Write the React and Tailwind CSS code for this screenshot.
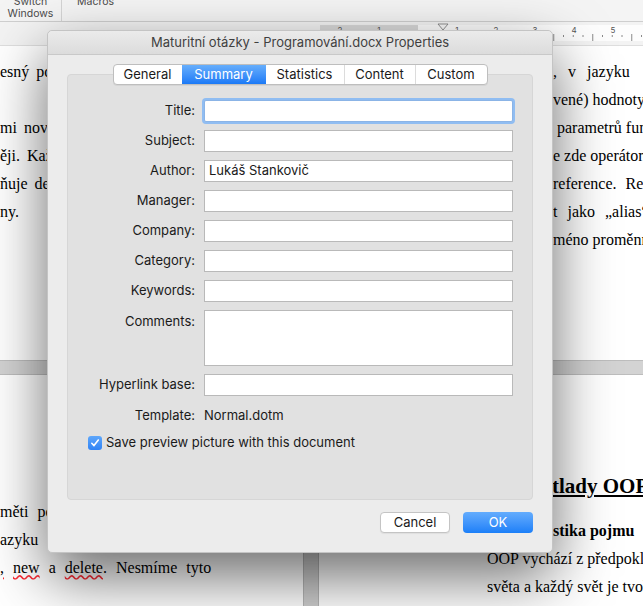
import React from 'react';

const ui = { fontFamily: 'Inter, "Noto Sans", sans-serif' };
const serif = { fontFamily: '"Liberation Serif", "DejaVu Serif", serif' };

const fields = [
  { label: 'Title:', value: '', focus: true },
  { label: 'Subject:', value: '' },
  { label: 'Author:', value: 'Lukáš Stankovič' },
  { label: 'Manager:', value: '' },
  { label: 'Company:', value: '' },
  { label: 'Category:', value: '' },
  { label: 'Keywords:', value: '' },
];

const tabs = [
  { name: 'General', w: 'w-[68px]' },
  { name: 'Summary', w: 'w-[84px]', active: true },
  { name: 'Statistics', w: 'w-[78px]' },
  { name: 'Content', w: 'w-[71px]' },
  { name: 'Custom', w: 'w-[72px]' },
];

const Ruler = () => {
  const nums = [
    { x: 340, t: '2' }, { x: 379, t: '1' }, { x: 457, t: '1' }, { x: 496, t: '2' },
    { x: 535, t: '3' }, { x: 574, t: '4' }, { x: 613, t: '5' },
  ];
  const ticks = [];
  for (let x = 427; x < 643; x += 9.75) ticks.push(x);
  return (
    <svg width="643" height="23" className="block">
      <rect x="0" y="0" width="643" height="23" fill="#f3f3f3" />
      <rect x="320" y="3" width="98" height="16" fill="#d9d9d9" />
      <rect x="418" y="3" width="225" height="16" fill="#fdfdfd" />
      {ticks.map((x, i) => (
        <line key={i} x1={x} x2={x} y1={i % 4 === 1 ? 12 : 13} y2={i % 4 === 1 ? 19 : 15} stroke="#8a8a8a" strokeWidth="1" />
      ))}
      {nums.map((n) => (
        <text key={n.x} x={n.x} y="11" fontSize="8" fill="#555" textAnchor="middle" fontFamily="Inter, sans-serif">{n.t}</text>
      ))}
      <path d="M438 2 L448 2 L443 8 Z" fill="#fafafa" stroke="#777" strokeWidth="0.8" />
    </svg>
  );
};

const Line = ({ children, className = '' }) => (
  <div className={`h-[28px] leading-[28px] whitespace-nowrap overflow-hidden ${className}`}>{children}</div>
);

export default function App() {
  return (
    <div className="relative w-[643px] h-[606px] overflow-hidden bg-[#d6d6d6] flex flex-col" style={ui}>
      {/* toolbar */}
      <div className="h-[22px] bg-[#f4f4f4] border-b border-[#cfcfcf] flex items-start overflow-hidden shrink-0">
        <div className="w-[62px] shrink-0 flex flex-col items-center -mt-[4px] text-[10.5px] leading-[12px] text-[#4a4a4a] border-r border-[#d4d4d4] h-[26px]">
          <span>Switch</span>
          <span>Windows</span>
        </div>
        <div className="pl-[15px] -mt-[4px] text-[10.5px] leading-[12px] text-[#4a4a4a]">Macros</div>
      </div>
      <div className="shrink-0 border-b border-[#dedede]">
        <Ruler />
      </div>

      {/* top pages */}
      <div className="h-[315px] flex shrink-0 border-b border-[#bdbdbd]" style={serif}>
        <div className="w-[303px] shrink-0 overflow-hidden bg-white pt-[12px] text-[16px] text-black [word-spacing:3px]">
          <Line>esný pokus o</Line>
          <Line> </Line>
          <Line>mi nový</Line>
          <Line>ěji. Každý</Line>
          <Line>ňuje defi</Line>
          <Line>ny.</Line>
        </div>
        <div className="w-[16px] shrink-0 bg-[#d0d0d0]" />
        <div className="flex-1 min-w-0 overflow-hidden bg-white pt-[12px] pl-[234px] text-[16px] text-black">
          <Line className="[word-spacing:7px]">, v jazyku</Line>
          <Line>vené) hodnoty</Line>
          <Line>&nbsp;parametrů funkce</Line>
          <Line>e zde operátor</Line>
          <Line className="[word-spacing:5px]">reference. Re</Line>
          <Line className="[word-spacing:6px]">t jako „alias“</Line>
          <Line>méno proměnné</Line>
        </div>
      </div>
      <div className="h-[14px] bg-[#d3d3d3] border-b border-[#bdbdbd] shrink-0" />

      {/* bottom pages */}
      <div className="flex-1 flex" style={serif}>
        <div className="w-[303px] shrink-0 overflow-hidden bg-white pt-[123px] text-[16px] text-black [word-spacing:5px]">
          <Line>měti po</Line>
          <Line>azyku C</Line>
          <Line>
            <span className="underline decoration-wavy decoration-red-500">,</span>{' '}
            <span className="underline decoration-wavy decoration-red-500">new</span> a{' '}
            <span className="underline decoration-wavy decoration-red-500">delete</span>. Nesmíme tyto
          </Line>
        </div>
        <div className="w-[16px] shrink-0 bg-[#cdcdcd] border-x border-[#b5b5b5]" />
        <div className="flex-1 min-w-0 overflow-hidden bg-white pt-[96px] text-black">
          <div className="ml-[233px] h-[30px] leading-[30px] text-[21px] font-bold underline whitespace-nowrap overflow-hidden">tlady OOP</div>
          <div className="ml-[234px] mt-[16px] h-[28px] leading-[28px] text-[16px] font-bold whitespace-nowrap overflow-hidden">stika pojmu</div>
          <Line className="ml-[168px] text-[16px]">OOP vychází z předpokladu</Line>
          <Line className="ml-[168px] text-[16px]">světa a každý svět je tvořen</Line>
        </div>
      </div>

      {/* dialog */}
      <div className="absolute left-[47px] top-[30px] w-[506px] h-[523px] rounded-[5px] bg-[#ececec] border border-[#c4c4c4] shadow-[0_24px_60px_rgba(0,0,0,0.58)] flex flex-col">
        <div className="h-[24px] shrink-0 rounded-t-[5px] bg-gradient-to-b from-[#ebebeb] to-[#dcdcdc] border-b border-[#c9c9c9] flex items-center justify-center text-[13px] text-[#3f3f3f]">
          Maturitní otázky - Programování.docx Properties
        </div>
        <div className="flex-1 px-[19px] pt-[19px] flex flex-col">
          <div className="h-[426px] rounded-[4px] bg-[#e1e1e1] border border-[#d6d6d6] flex flex-col">
            <div className="-mt-[11px] self-center flex h-[21px] rounded-[4px] border border-[#bebebe] bg-white overflow-hidden shadow-[0_1px_0_rgba(0,0,0,0.05)]">
              {tabs.map((t, i) => (
                <div
                  key={t.name}
                  className={`${t.w} flex items-center justify-center text-[13px] ${
                    t.active
                      ? 'bg-gradient-to-b from-[#66aefc] to-[#1979f6] text-white'
                      : 'text-[#1a1a1a]'
                  } ${i > 0 && !t.active && !tabs[i - 1].active ? 'border-l border-[#dcdcdc]' : ''}`}
                >
                  {t.name}
                </div>
              ))}
            </div>

            <div className="mt-[15px] grid grid-cols-[127px_309px] gap-x-[9px] gap-y-[8px] items-center text-[13px] text-[#1a1a1a]">
              {fields.map((f) => (
                <React.Fragment key={f.label}>
                  <div className="text-right">{f.label}</div>
                  <div
                    className={`h-[22px] bg-white flex items-center px-[4px] ${
                      f.focus
                        ? 'border border-[#8bb4e6] rounded-[2px] shadow-[0_0_0_2px_#90bdf2]'
                        : 'border border-[#b9b9b9]'
                    }`}
                  >
                    {f.value}
                  </div>
                </React.Fragment>
              ))}
              <div className="text-right self-start pt-[2px]">Comments:</div>
              <div className="h-[56px] bg-white border border-[#b9b9b9]" />
              <div className="text-right">Hyperlink base:</div>
              <div className="h-[22px] bg-white border border-[#b9b9b9]" />
              <div className="text-right h-[22px] leading-[22px]">Template:</div>
              <div className="h-[22px] leading-[22px]">Normal.dotm</div>
            </div>

            <div className="mt-[6px] ml-[20px] flex items-center gap-[4px] h-[22px] text-[13px] text-[#1a1a1a]">
              <div className="w-[14px] h-[14px] rounded-[3px] bg-gradient-to-b from-[#5ea7fb] to-[#2f83f5] flex items-center justify-center">
                <svg width="10" height="10" viewBox="0 0 10 10">
                  <path d="M1.8 5.3 L4 7.6 L8.3 2" fill="none" stroke="white" strokeWidth="1.6" strokeLinecap="round" strokeLinejoin="round" />
                </svg>
              </div>
              <span>Save preview picture with this document</span>
            </div>
          </div>

          <div className="mt-[12px] flex justify-end gap-[13px] text-[13px]">
            <div className="w-[70px] h-[21px] rounded-[4px] bg-white border border-[#c4c4c4] flex items-center justify-center text-[#1a1a1a] shadow-[0_1px_1px_rgba(0,0,0,0.06)]">
              Cancel
            </div>
            <div className="w-[70px] h-[21px] rounded-[4px] bg-gradient-to-b from-[#63acfd] to-[#1a7ff8] flex items-center justify-center text-white">
              OK
            </div>
          </div>
        </div>
      </div>
    </div>
  );
}
